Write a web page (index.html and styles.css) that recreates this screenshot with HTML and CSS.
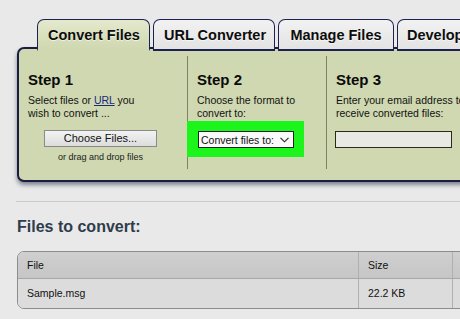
FILE: index.html
```html
<!DOCTYPE html>
<html>
<head>
<meta charset="utf-8">
<link rel="stylesheet" href="styles.css">
</head>
<body>
<div class="page">
  <nav class="tabs">
    <div class="tab active">Convert Files</div>
    <div class="tab">URL Converter</div>
    <div class="tab">Manage Files</div>
    <div class="tab">Developer</div>
  </nav>
  <section class="panel">
    <div class="step s1">
      <h2>Step 1</h2>
      <p>Select files or <a class="link">URL</a> you<br>wish to convert ...</p>
      <div class="btn">Choose Files...</div>
      <div class="drag">or drag and drop files</div>
    </div>
    <div class="step s2">
      <h2>Step 2</h2>
      <p>Choose the format to<br>convert to:</p>
      <div class="hl">
        <div class="select"><span>Convert files to:</span>
          <svg class="chev" width="9" height="6" viewBox="0 0 9 6"><path d="M0.5 0.8 L4.5 4.8 L8.5 0.8" fill="none" stroke="#222" stroke-width="1.1"/></svg>
        </div>
      </div>
    </div>
    <div class="step s3">
      <h2>Step 3</h2>
      <p class="nowrap">Enter your email address to<br>receive converted files:</p>
      <div class="email"></div>
    </div>
  </section>
  <div class="rule"></div>
  <h1 class="title">Files to convert:</h1>
  <div class="table">
    <div class="row head">
      <div class="c1">File</div>
      <div class="c2">Size</div>
      <div class="c3"></div>
    </div>
    <div class="row">
      <div class="c1">Sample.msg</div>
      <div class="c2">22.2 KB</div>
      <div class="c3"></div>
    </div>
  </div>
</div>
</body>
</html>
```
FILE: styles.css
```css
html, body {
  margin: 0;
  padding: 0;
}
body {
  width: 460px;
  height: 319px;
  overflow: hidden;
  background: #e9e9e9;
  font-family: "Liberation Sans", Arial, sans-serif;
  color: #111;
}
.page {
  width: 520px;
  padding-top: 19px;
}
.tabs {
  display: flex;
  gap: 3px;
  margin-left: 37px;
  height: 30px;
  position: relative;
  z-index: 2;
  margin-bottom: -2px;
}
.tab {
  box-sizing: border-box;
  flex-shrink: 0;
  white-space: nowrap;
  height: 32px;
  padding: 0 10px;
  border: 1.5px solid #1c2152;
  border-bottom: 2px solid #1c2152;
  border-radius: 7px 7px 0 0;
  background: linear-gradient(#f2f2f2, #e3e3e3);
  font-weight: bold;
  font-size: 14.5px;
  line-height: 30px;
  color: #0d0d0d;
  text-align: center;
  text-shadow: 0 1px 0 rgba(255,255,255,0.6);
}
.tab:nth-child(1) { width: 113px; }
.tab:nth-child(2) { width: 122px; }
.tab:nth-child(3) { width: 116px; }
.tab:nth-child(4) { text-align: left; padding-left: 9px; }
.tab.active {
  background: linear-gradient(#e4e9cd, #cfd8b0);
  border-bottom: 2px solid #cfd8b0;
}
.panel {
  box-sizing: border-box;
  margin-left: 17px;
  width: 500px;
  height: 135px;
  background: #cfd8b0;
  border: 2px solid #1a1d42;
  border-radius: 7px 0 0 7px;
  box-shadow: 0 3px 4px rgba(40,50,70,0.55);
  display: grid;
  grid-template-columns: 168px 139px 1fr;
  position: relative;
  z-index: 1;
}
.step {
  margin: 7px 0 11px 0;
  padding: 15px 0 0 9px;
}
.s2, .s3 {
  border-left: 1px solid #7d8264;
}
h2 {
  margin: 0;
  font-size: 15px;
  line-height: 18px;
  font-weight: bold;
  color: #0a0a0a;
}
p {
  margin: 5px 0 0 0;
  font-size: 10.5px;
  line-height: 13px;
  color: #111;
}
.nowrap {
  white-space: nowrap;
}
.link {
  color: #1b2a7a;
  text-decoration: underline;
}
.btn {
  box-sizing: border-box;
  margin: 10px 0 0 16px;
  width: 113px;
  height: 17px;
  border: 1px solid #8a8a8a;
  background: linear-gradient(#f3f3f3, #dcdcdc);
  font-size: 11px;
  line-height: 15px;
  text-align: center;
  color: #111;
}
.drag {
  margin: 4px 0 0 16px;
  width: 113px;
  text-align: center;
  font-size: 9px;
  line-height: 12px;
  color: #222;
}
.hl {
  box-sizing: border-box;
  margin: 1px 0 0 -10px;
  width: 117px;
  height: 36px;
  background: #1cf51c;
  padding: 10px 10px 0 11px;
}
.select {
  box-sizing: border-box;
  height: 17px;
  width: 96px;
  background: #fafafa;
  border: 1px solid #222;
  display: flex;
  align-items: center;
  justify-content: space-between;
  padding: 0 4px 0 2px;
  font-size: 10.5px;
  color: #111;
}
.email {
  box-sizing: border-box;
  margin: 11px 0 0 -1px;
  width: 117px;
  height: 17px;
  border: 1px solid #2a2a1a;
  background: #e8e8e4;
}
.rule {
  margin: 19px 0 0 16px;
  height: 1px;
  background: #c9c9c9;
}
.title {
  margin: 15px 0 0 17px;
  font-size: 16px;
  line-height: 20px;
  font-weight: bold;
  color: #2e3c4c;
}
.table {
  margin: 14px 0 0 17px;
  width: 500px;
  border: 1px solid #8c8c8c;
  border-radius: 7px 0 0 7px;
  overflow: hidden;
}
.row {
  display: grid;
  grid-template-columns: 340px 94px 1fr;
  background: #dcdcdc;
  height: 29px;
  font-size: 10.5px;
  line-height: 29px;
  color: #111;
}
.row.head {
  background: linear-gradient(#cfcfcf, #c6c6c6);
  height: 26px;
  line-height: 26px;
  border-bottom: 1px solid #a8a8a8;
}
.c1 {
  padding-left: 9px;
}
.c2 {
  padding-left: 9px;
  border-left: 1px solid #b0b0b0;
}
.c3 {
  border-left: 1px solid #b0b0b0;
}
```
